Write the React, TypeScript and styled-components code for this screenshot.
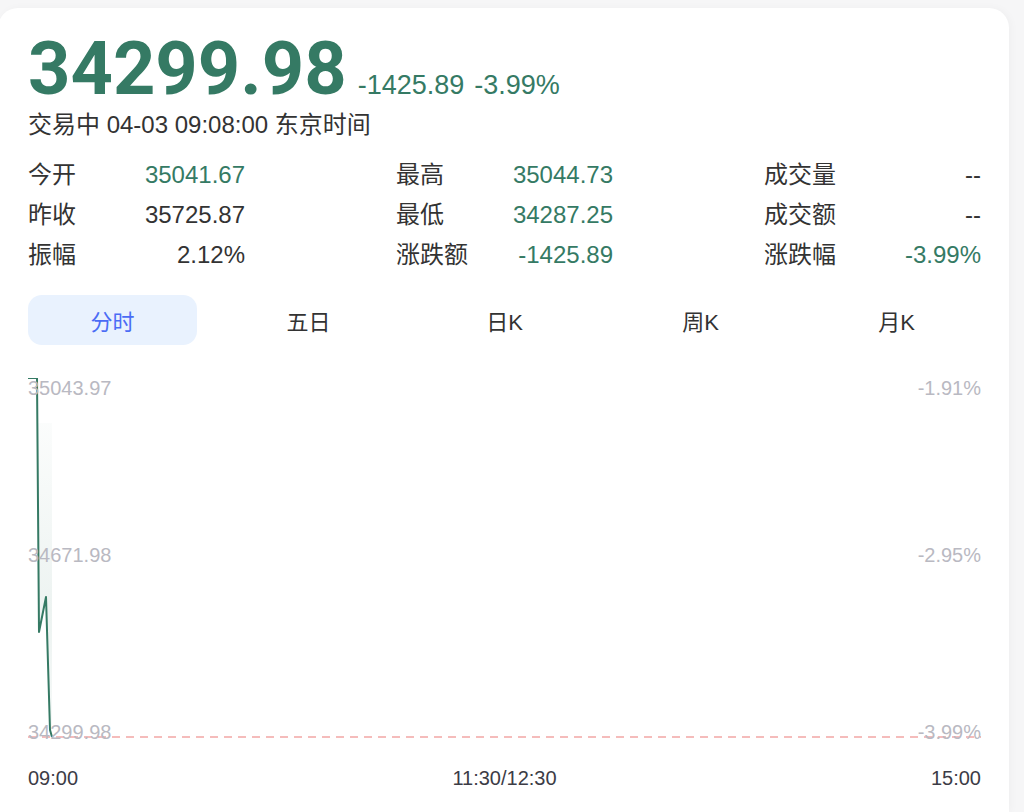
import styled, { createGlobalStyle } from "styled-components";

const GREEN = "#357a64";

const GlobalStyle = createGlobalStyle`
	html, body {
		margin: 0;
		padding: 0;
		overflow: hidden;
		background: #f6f6f7;
	}
	body {
		font-family: "Liberation Sans", "Noto Sans CJK SC", sans-serif;
		color: #333333;
	}
`;

const Card = styled.div`
	box-sizing: border-box;
	width: 1011px;
	height: calc(100vh - 8px);
	margin: 8px 0 0 -2px;
	padding: 24px 28px 0 30px;
	background: #ffffff;
	border-radius: 20px 20px 0 0;
	box-shadow: 2px 0 8px rgba(0, 0, 0, 0.03);
`;

const PriceRow = styled.div`
	display: flex;
	align-items: baseline;
	gap: 11px;
`;

const BigPrice = styled.div`
	font-family: Roboto, "Liberation Sans", sans-serif;
	font-weight: 700;
	font-size: 74px;
	line-height: 74px;
	color: ${GREEN};
`;

const Change = styled.span`
	font-size: 27px;
	color: ${GREEN};
	margin-right: 10px;
`;

const Status = styled.div`
	margin-top: 3px;
	font-size: 24px;
	line-height: 32px;
	color: #333333;
`;

const Stats = styled.div`
	display: grid;
	grid-template-columns: repeat(3, 1fr);
	column-gap: 151px;
	margin-top: 14px;
`;

const Stat = styled.div`
	display: flex;
	justify-content: space-between;
	align-items: baseline;
	height: 40px;
	line-height: 40px;
	font-size: 24px;
`;

const Label = styled.span`
	color: #333333;
`;

const Value = styled.span<{ $green?: boolean }>`
	color: ${({ $green }) => ($green ? GREEN : "#333333")};
`;

const Tabs = styled.div`
	display: grid;
	grid-template-columns: repeat(5, 1fr);
	column-gap: 27px;
	margin-top: 20px;
`;

const Tab = styled.div<{ $active?: boolean }>`
	display: flex;
	align-items: center;
	justify-content: center;
	height: 50px;
	border-radius: 14px;
	font-size: 22px;
	background: ${({ $active }) => ($active ? "#e9f2fe" : "transparent")};
	color: ${({ $active }) => ($active ? "#4b6cf5" : "#333333")};
`;

const Chart = styled.div`
	position: relative;
	height: 362px;
	margin-top: 33px;
`;

const Plot = styled.svg`
	display: block;
	width: 100%;
	height: 100%;
`;

const AxisLabel = styled.span<{ $side: "left" | "right" }>`
	position: absolute;
	${({ $side }) => ($side === "left" ? "left: 0;" : "right: 0;")}
	font-size: 20px;
	line-height: 20px;
	color: #b9b9c2;
`;

const TimeAxis = styled.div`
	display: flex;
	justify-content: space-between;
	margin-top: 26px;
	font-size: 20px;
	line-height: 24px;
	color: #3c3c46;
`;

const stats: [string, string, boolean][] = [
	["今开", "35041.67", true],
	["最高", "35044.73", true],
	["成交量", "--", false],
	["昨收", "35725.87", false],
	["最低", "34287.25", true],
	["成交额", "--", false],
	["振幅", "2.12%", false],
	["涨跌额", "-1425.89", true],
	["涨跌幅", "-3.99%", true],
];

const tabs = ["分时", "五日", "日K", "周K", "月K"];

const levels: [string, string, number][] = [
	["35043.97", "-1.91%", 0],
	["34671.98", "-2.95%", 167],
	["34299.98", "-3.99%", 344],
];

export default function App() {
	return (
		<>
			<GlobalStyle />
			<Card>
				<PriceRow>
					<BigPrice>34299.98</BigPrice>
					<div>
						<Change>-1425.89</Change>
						<Change>-3.99%</Change>
					</div>
				</PriceRow>
				<Status>交易中 04-03 09:08:00 东京时间</Status>

				<Stats>
					{stats.map(([label, value, green]) => (
						<Stat key={label}>
							<Label>{label}</Label>
							<Value $green={green}>{value}</Value>
						</Stat>
					))}
				</Stats>

				<Tabs>
					{tabs.map((t, i) => (
						<Tab key={t} $active={i === 0}>
							{t}
						</Tab>
					))}
				</Tabs>

				<Chart>
					<Plot viewBox="0 0 953 362" preserveAspectRatio="none">
						<defs>
							<linearGradient id="area" x1="0" y1="0" x2="0" y2="1">
								<stop offset="0" stopColor={GREEN} stopOpacity="0.02" />
								<stop offset="0.6" stopColor={GREEN} stopOpacity="0.09" />
								<stop offset="1" stopColor={GREEN} stopOpacity="0.04" />
							</linearGradient>
						</defs>
						<polygon points="9.4,45 11,254 18,219 22,352 24,359 24,45" fill="url(#area)" />
						<line
							x1="0"
							y1="359"
							x2="953"
							y2="359"
							stroke="#f2a7a5"
							strokeWidth="1.5"
							strokeDasharray="8 6"
						/>
						<polyline
							points="-1,0 9,0 11,254 18,219 22,352 24,359"
							fill="none"
							stroke={GREEN}
							strokeWidth="2"
							strokeLinejoin="round"
						/>
					</Plot>
					{levels.map(([price, pct, top]) => (
						<div key={price}>
							<AxisLabel $side="left" style={{ top }}>
								{price}
							</AxisLabel>
							<AxisLabel $side="right" style={{ top }}>
								{pct}
							</AxisLabel>
						</div>
					))}
				</Chart>

				<TimeAxis>
					<span>09:00</span>
					<span>11:30/12:30</span>
					<span>15:00</span>
				</TimeAxis>
			</Card>
		</>
	);
}
